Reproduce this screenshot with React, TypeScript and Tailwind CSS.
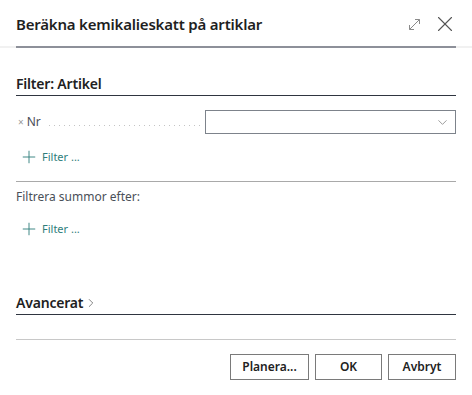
import { ChevronDown, ChevronRight, Plus, X } from "lucide-react";

function AddFilter() {
  return (
    <button className="flex items-center gap-[3px] pl-[3px] text-[11px] text-[#2f7d7b] h-[14px]">
      <Plus size={20} strokeWidth={1.1} className="text-[#2f7d7b]" />
      <span>Filter ...</span>
    </button>
  );
}

export default function App() {
  return (
    <div
      className="w-[472px] h-[395px] bg-white text-[#212121] overflow-hidden"
      style={{ fontFamily: '"Noto Sans", "Open Sans", sans-serif' }}
    >
      {/* Header */}
      <div className="h-[46px] flex items-center justify-between pl-4 pr-[20px]">
        <h1 className="text-[15px] font-semibold tracking-[-0.2px] text-[#1f1f1f] pt-[2px]">
          Beräkna kemikalieskatt på artiklar
        </h1>
        <div className="flex items-center gap-[11px] pt-[2px]">
          <svg width="13" height="13" viewBox="0 0 13 13" fill="none" stroke="#8a8a8a" strokeWidth="1">
            <path d="M1.5 11.5 L11.5 1.5 M7 1.5 H11.5 V6 M1.5 7 V11.5 H6" />
          </svg>
          <X size={26} strokeWidth={1} className="text-[#555] -mr-[6px]" />
        </div>
      </div>
      <div className="h-[2px] bg-[#f1f1f1]">
        <div className="mx-4 h-[2px] bg-[#8d9099]" />
      </div>

      <div className="px-4">
        {/* Filter: Artikel */}
        <div className="pt-[27px] border-b border-[#2f3540] pb-[3px]">
          <h2 className="text-[14px] font-semibold tracking-[-0.2px] leading-[17px] text-[#212121]">
            Filter: Artikel
          </h2>
        </div>

        <div className="mt-[14px] flex items-center h-[24px]">
          <div className="flex items-center w-[189px] text-[12px]">
            <span className="text-[10px] text-[#9a9a9a] pl-[2px] pr-[3px]">×</span>
            <span className="text-[#4a5058]">Nr</span>
            <span className="flex-1 ml-[8px] mr-[4px] h-[1px] translate-y-[3px] bg-[repeating-linear-gradient(90deg,#c4c4c4_0_1px,transparent_1px_5px)]" />
          </div>
          <div className="flex-1 h-[24px] border border-[#7d838b] flex items-center justify-end pr-[5px]">
            <ChevronDown size={15} strokeWidth={1.1} className="text-[#707070]" />
          </div>
        </div>

        <div className="mt-[16px]">
          <AddFilter />
        </div>

        <div className="mt-[17px] border-t border-[#a9a9a9]" />

        <p className="mt-[7px] text-[12px] leading-[16px] text-[#4a5058]">Filtrera summor efter:</p>

        <div className="mt-[17px]">
          <AddFilter />
        </div>

        {/* Avancerat */}
        <div className="mt-[58px] border-b border-[#2f3540] pb-[3px] flex items-center">
          <h2 className="text-[14px] font-semibold tracking-[-0.2px] leading-[17px] text-[#212121]">
            Avancerat
          </h2>
          <ChevronRight size={14} strokeWidth={1.1} className="text-[#444] ml-[1px]" />
        </div>

        <div className="mt-[24px] border-t border-[#c8c8c8]" />

        <div className="mt-[14px] flex justify-end gap-[6px]">
          <button className="w-[79px] h-[26px] border border-[#7a7a7a] text-[12px] font-semibold text-[#222]">
            Planera...
          </button>
          <button className="w-[67px] h-[26px] border border-[#7a7a7a] text-[12px] font-semibold text-[#222]">
            OK
          </button>
          <button className="w-[68px] h-[26px] border border-[#7a7a7a] text-[12px] font-semibold text-[#222]">
            Avbryt
          </button>
        </div>
      </div>
    </div>
  );
}
